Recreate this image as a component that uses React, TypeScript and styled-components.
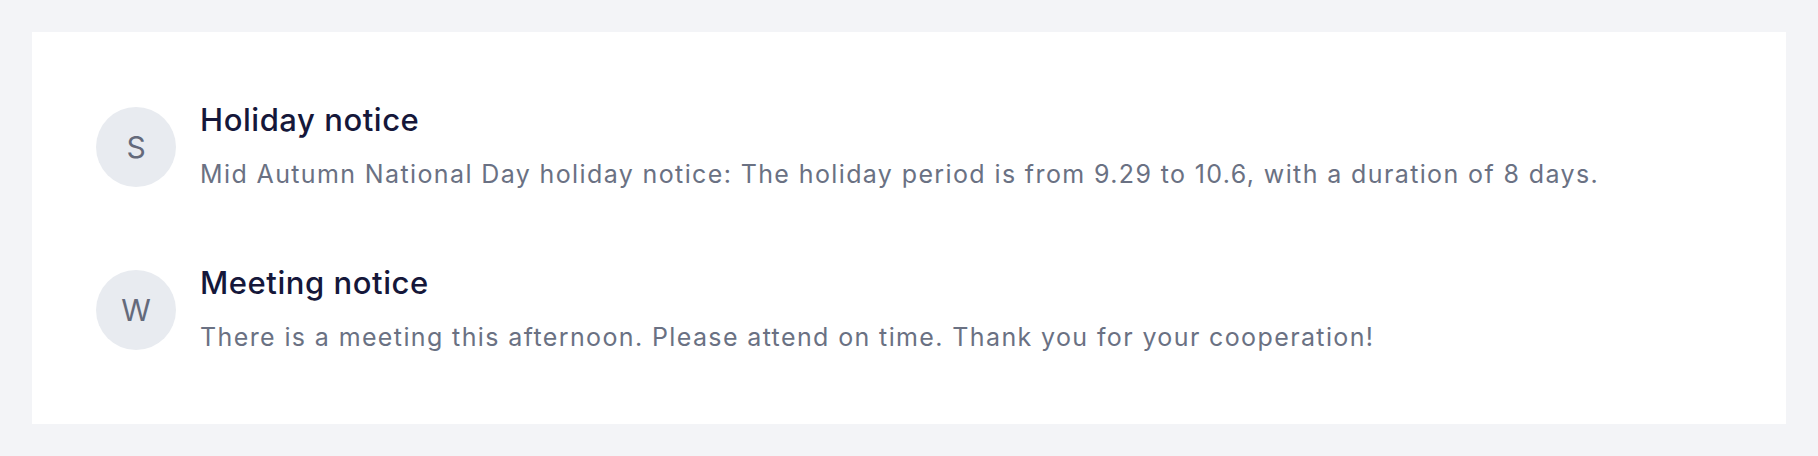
import React from "react";
import styled, { createGlobalStyle } from "styled-components";

const GlobalStyle = createGlobalStyle`
  html, body {
    margin: 0;
    padding: 0;
    background: #f3f4f7;
  }
  body {
    font-family: Inter, "Noto Sans", "Liberation Sans", sans-serif;
    -webkit-font-smoothing: antialiased;
  }
`;

const Page = styled.div`
  padding: 32px;
  box-sizing: border-box;
  width: 100%;
`;

const Card = styled.div`
  background: #ffffff;
  padding: 70px 64px 69px;
  display: flex;
  flex-direction: column;
  gap: 73px;
`;

const Row = styled.div`
  display: flex;
  align-items: center;
  gap: 24px;
`;

const Avatar = styled.div`
  width: 80px;
  height: 80px;
  flex: 0 0 80px;
  border-radius: 50%;
  background: #e8ebf0;
  color: #646a7b;
  font-size: 30px;
  display: flex;
  align-items: center;
  justify-content: center;
`;

const Body = styled.div`
  display: flex;
  flex-direction: column;
  gap: 18px;
`;

const Title = styled.div`
  font-size: 31px;
  line-height: 36px;
  font-weight: 500;
  letter-spacing: 0.55px;
  color: #15173a;
`;

const Desc = styled.div`
  font-size: 25px;
  line-height: 36px;
  letter-spacing: 1.38px;
  color: #6a7183;
`;

const notices = [
  {
    initial: "S",
    title: "Holiday notice",
    desc: "Mid Autumn National Day holiday notice: The holiday period is from 9.29 to 10.6, with a duration of 8 days.",
  },
  {
    initial: "W",
    title: "Meeting notice",
    desc: "There is a meeting this afternoon. Please attend on time. Thank you for your cooperation!",
  },
];

export default function App() {
  return (
    <>
      <GlobalStyle />
      <Page>
        <Card>
          {notices.map((n) => (
            <Row key={n.title}>
              <Avatar>{n.initial}</Avatar>
              <Body>
                <Title>{n.title}</Title>
                <Desc>{n.desc}</Desc>
              </Body>
            </Row>
          ))}
        </Card>
      </Page>
    </>
  );
}
